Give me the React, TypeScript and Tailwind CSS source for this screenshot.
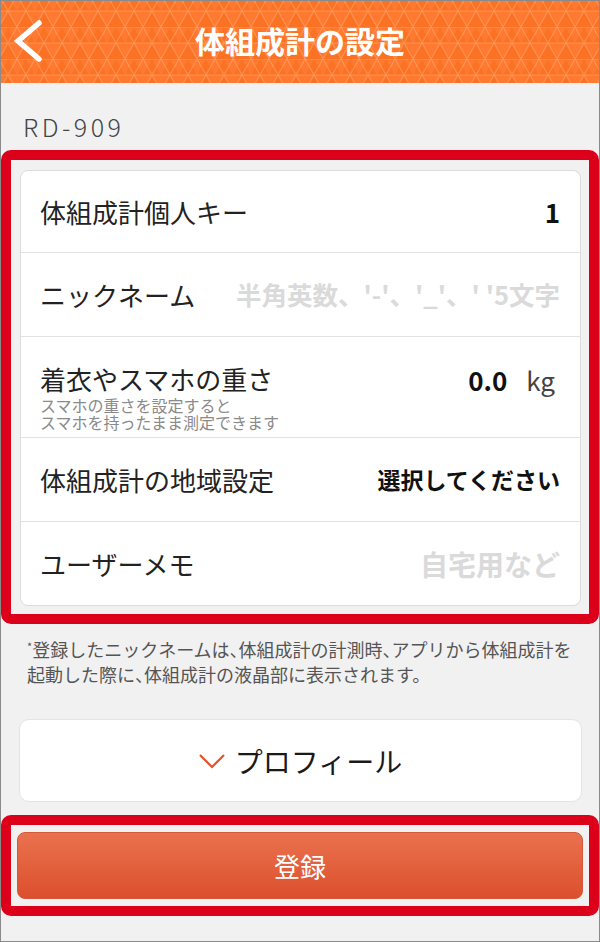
const FONT = '[font-family:"Noto_Sans_CJK_JP","Noto_Sans",sans-serif]';

function HeaderPattern() {
  return (
    <svg className="absolute inset-0 h-full w-full" aria-hidden="true">
      <defs>
        <pattern id="tri" width="18" height="32" patternUnits="userSpaceOnUse" x="-2" y="-6">
          <path d="M0 16L9 0L18 16Z" fill="rgba(235,85,0,0.22)" />
          <path d="M9 16L18 32L0 32Z" fill="rgba(235,85,0,0.22)" />
          <path d="M0 0H18M0 16H18M0 32L18 0M0 0L18 32" stroke="rgba(255,200,160,0.35)" strokeWidth="1.1" fill="none" />
        </pattern>
      </defs>
      <rect width="100%" height="100%" fill="url(#tri)" />
    </svg>
  );
}

// half-width punctuation for the comma only
function Tight({ text }: { text: string }) {
  const parts = text.split('、');
  return (
    <>
      {parts.map((p, i) => (
        <span key={i}>
          {p}
          {i < parts.length - 1 && <span className="[font-feature-settings:'halt']">、</span>}
        </span>
      ))}
    </>
  );
}

function Row({
  label,
  children,
  height,
}: {
  label: string;
  children: React.ReactNode;
  height: string;
}) {
  return (
    <div className={`flex items-center justify-between pl-[19px] pr-[20px] ${height}`}>
      <span className="text-[26px] leading-[30px] text-[#222]">{label}</span>
      {children}
    </div>
  );
}

export default function App() {
  return (
    <div className={`w-[600px] h-[942px] overflow-hidden border border-[#8a8a8a] bg-[#f1f1f1] ${FONT}`}>
      {/* Header */}
      <div className="relative h-[82px] bg-[#ff7a30]">
        <HeaderPattern />
        <div className="relative grid h-full grid-cols-[70px_1fr_70px] items-center">
          <svg width="30" height="44" viewBox="0 0 30 44" className="ml-[12px] -mt-[2px]">
            <polyline points="26,4 5,22 26,40" fill="none" stroke="#fff" strokeWidth="5.5" strokeLinecap="round" strokeLinejoin="miter" />
          </svg>
          <h1 className="-mt-[4px] text-center text-[30px] font-bold leading-none text-white">体組成計の設定</h1>
          <div />
        </div>
      </div>

      {/* Device name */}
      <div className="pl-[22px] pt-[28px] pb-[9px] text-[25px] leading-[30px] tracking-[3.5px] font-light text-[#444]">
        RD-909
      </div>

      {/* Settings (highlighted) */}
      <div className="rounded-[10px] border-[10px] border-[#dd001b] pt-[10px] pl-[9px] pr-[8px] pb-[8px]">
        <div className="overflow-hidden rounded-[8px] border border-[#dcdcdc] bg-white divide-y divide-[#e2e2e2]">
          <Row label="体組成計個人キー" height="h-[82px]">
            <span className="text-[26px] font-bold text-[#111]">1</span>
          </Row>
          <Row label="ニックネーム" height="h-[84px]">
            <span className="text-[25.5px] font-bold text-[#dadada]">半角英数、'-'、'_'、' '5文字</span>
          </Row>
          <div className="flex h-[101px] items-start justify-between pl-[19px] pr-[25px] pt-[27px]">
            <div>
              <div className="text-[26px] leading-[30px] text-[#222]">着衣やスマホの重さ</div>
              <div className="mt-[3px] text-[16px] leading-[17px] text-[#8a8a8a]">
                <div>スマホの重さを設定すると</div>
                <div>スマホを持ったまま測定できます</div>
              </div>
            </div>
            <div className="flex items-baseline gap-[19px] pt-[1px]">
              <span className="text-[26px] font-bold leading-[30px] text-[#111]">0.0</span>
              <span className="text-[26px] leading-[30px] text-[#444]">kg</span>
            </div>
          </div>
          <Row label="体組成計の地域設定" height="h-[84px]">
            <span className="text-[23px] font-bold text-[#111]">選択してください</span>
          </Row>
          <Row label="ユーザーメモ" height="h-[83px]">
            <span className="text-[28px] font-bold text-[#dadada]">自宅用など</span>
          </Row>
        </div>
      </div>

      {/* Note */}
      <p className="mt-[13px] px-[26px] text-[18px] leading-[25px] text-[#555]">
        <span className="align-top text-[11px] leading-[18px]">*</span>
        <Tight text="登録したニックネームは、体組成計の計測時、アプリから体組成計を" />
        <br />
        <Tight text="起動した際に、体組成計の液晶部に表示されます。" />
      </p>

      {/* Profile */}
      <button className="mt-[32px] ml-[18px] flex h-[83px] w-[563px] items-center justify-center gap-[10px] rounded-[10px] border border-[#e4e4e4] bg-white">
        <svg width="26" height="16" viewBox="0 0 26 16">
          <polyline points="1,2 13,14 25,2" fill="none" stroke="#e4532b" strokeWidth="2.2" />
        </svg>
        <span className="text-[28px] leading-none text-[#1a1a1a]">プロフィール</span>
      </button>

      {/* Register (highlighted) */}
      <div className="mt-[13px] rounded-[10px] border-[10px] border-[#dd001b] px-[6px] py-[7px]">
        <button className="flex h-[67px] w-full items-center justify-center rounded-[8px] border border-[#d4583a] bg-gradient-to-b from-[#ea714e] to-[#dc4f2d] text-[26px] text-white">
          登録
        </button>
      </div>
    </div>
  );
}
